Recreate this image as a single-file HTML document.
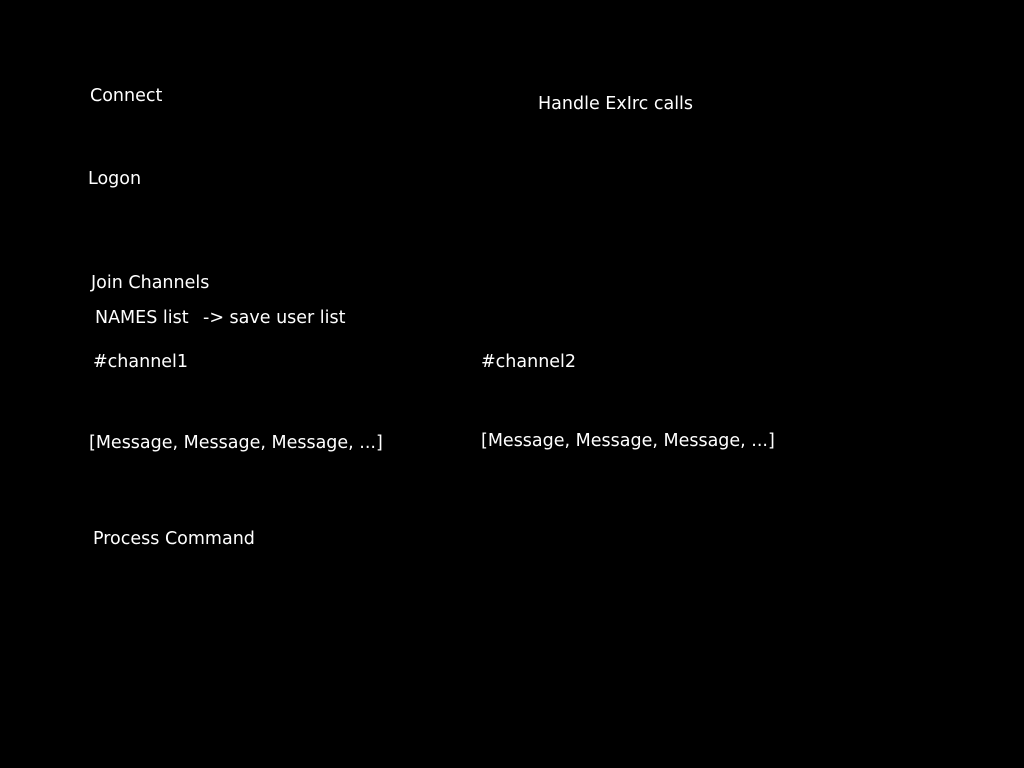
<!DOCTYPE html>
<html><head><meta charset="utf-8"><style>
html,body{margin:0;padding:0;background:#000;width:1024px;height:768px;overflow:hidden}
div{position:absolute;color:#fff;font-family:"DejaVu Sans","Liberation Sans",sans-serif;font-size:17.5px;line-height:20px;white-space:pre}
</style></head><body>
<div style="left:90px;top:86px">Connect</div>
<div style="left:538px;top:94px">Handle ExIrc calls</div>
<div style="left:88px;top:169px">Logon</div>
<div style="left:91px;top:273px">Join Channels</div>
<div style="left:95px;top:308px">NAMES list</div>
<div style="left:203px;top:308px">-&gt; save user list</div>
<div style="left:93px;top:352px">#channel1</div>
<div style="left:481px;top:352px">#channel2</div>
<div style="left:89px;top:433px">[Message, Message, Message, ...]</div>
<div style="left:481px;top:431px">[Message, Message, Message, ...]</div>
<div style="left:93px;top:529px">Process Command</div>
</body></html>
